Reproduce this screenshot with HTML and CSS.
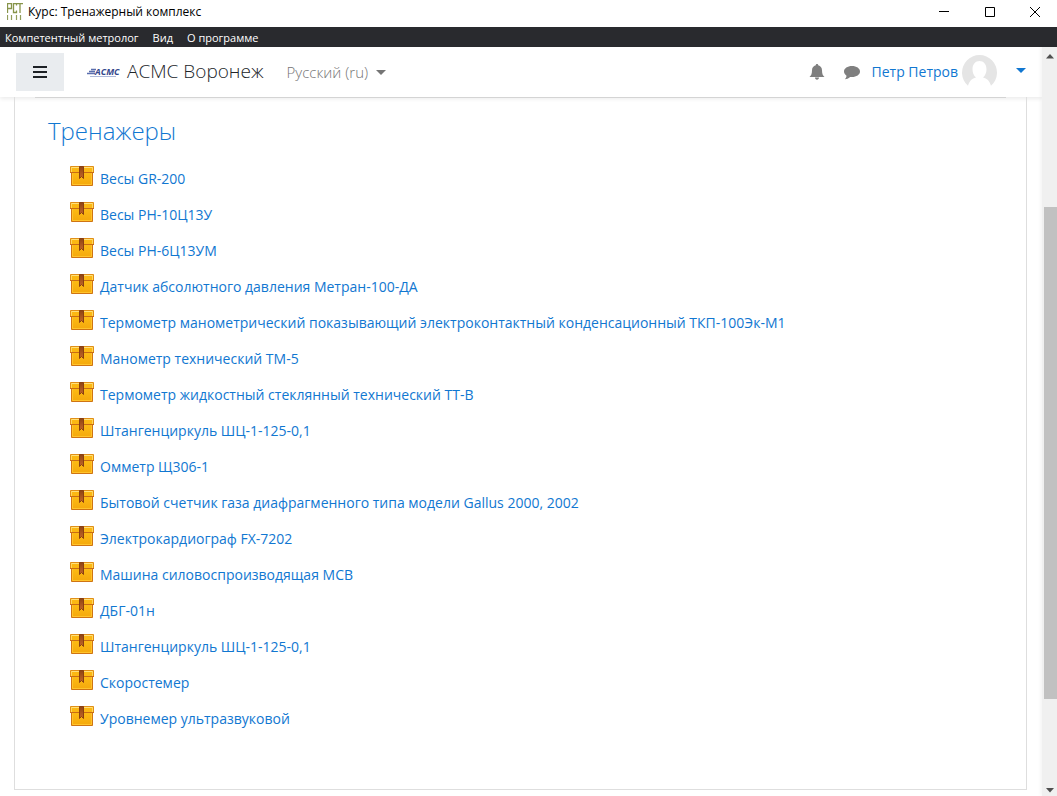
FILE: index.html
```html
<!DOCTYPE html>
<html lang="ru">
<head>
<meta charset="utf-8">
<title>Курс: Тренажерный комплекс</title>
<link rel="stylesheet" href="styles.css">
</head>
<body>
<svg class="defs" aria-hidden="true">
  <defs>
    <linearGradient id="box-fill" x1="0" y1="0" x2="0" y2="1"><stop offset="0" stop-color="#fdbd15"/><stop offset="1" stop-color="#f5a80c"/></linearGradient>
    <linearGradient id="tape-fill" x1="0" y1="0" x2="0" y2="1"><stop offset="0" stop-color="#8f4312"/><stop offset="1" stop-color="#c4682c"/></linearGradient>
  </defs>
  <symbol id="box" viewBox="0 0 24 20">
    <path d="M1.500 5.500h21v14h-21z" fill="url(#box-fill)" stroke="#cf7413"/>
    <path d="M2.500 7v11.500h19V7" fill="none" stroke="#ffc42c"/>
    <path d="M.5.5h23v6H.5z" fill="#fcb813" stroke="#e08f18"/>
    <path d="M1 1.500h22" stroke="#ffe07a"/>
    <path d="M1.500 1v5M22.500 1v5" stroke="#ffd75c"/>
    <path d="M0 6.500h24" stroke="#c96c14"/>
    <path d="M9.500.5h4v12l-2-2-2 2z" fill="url(#tape-fill)" stroke="#8a3f10"/>
  </symbol>
</svg>
<div class="window">
  <header class="titlebar">
    <svg class="app-icon" viewBox="0 0 16 17" aria-hidden="true">
      <path d="M.5 10V.5h4v5h-4M9.500 2.500v-2h-3v9h3v-2M10 .5h6M13 .5V10" fill="none" stroke="#87944a" stroke-width="1.300"/>
      <path d="M.5 12v5M4.500 12v5M9.500 12v5M13.500 12v5" stroke="#919d5a" stroke-width="1.200"/>
    </svg>
    <span class="window-title">Курс: Тренажерный комплекс</span>
    <div class="window-controls">
      <button class="window-button" aria-label="Свернуть"><svg viewBox="0 0 12 12"><path d="M1 5.500h10" stroke="#000"/></svg></button>
      <button class="window-button" aria-label="Развернуть"><svg viewBox="0 0 12 12"><path d="M1.500 1.500h9v9h-9z" fill="none" stroke="#000"/></svg></button>
      <button class="window-button" aria-label="Закрыть"><svg viewBox="0 0 12 12"><path d="M1 1l10 10M11 1L1 11" stroke="#000"/></svg></button>
    </div>
  </header>
  <nav class="menubar">
    <button class="menu-item">Компетентный метролог</button>
    <button class="menu-item">Вид</button>
    <button class="menu-item">О программе</button>
  </nav>
  <div class="viewport">
    <div class="page">
      <header class="navbar">
        <button class="drawer-toggle" aria-label="Меню"><svg viewBox="0 0 14 12"><path d="M0 1h14M0 6h14M0 11h14" stroke="#1d2125" stroke-width="2"/></svg></button>
        <a class="brand" href="#">
          <svg class="logo" viewBox="0 0 34 12" aria-hidden="true">
            <path d="M5 3.500h5M3 5.500h6M1 7.500h8" stroke="#5b6fae" stroke-width="1.500"/>
            <text class="logo-text" x="9" y="8.500">АСМС</text>
            <path d="M4 10.500h26" stroke="#aeb9da"/>
          </svg>
          <span class="site-name">АСМС Воронеж</span>
        </a>
        <button class="language">Русский (ru)<span class="caret"></span></button>
        <div class="user-area">
          <button class="icon-button" aria-label="Уведомления"><svg viewBox="0 0 16 16"><path d="M8 0c.8 0 1.200.5 1.200 1.300C11.800 2 13 4 13 6.200c0 3.600.8 5.300 2.500 6.800H.5C2.200 11.500 3 9.800 3 6.200 3 4 4.200 2 6.800 1.300 6.800.5 7.200 0 8 0zM6 13.500h4c0 1.300-.8 2.200-2 2.200s-2-.9-2-2.200z" fill="#7f7f7f"/></svg></button>
          <button class="icon-button" aria-label="Сообщения"><svg viewBox="0 0 16 16"><path d="M8 2c4.500 0 8 2.400 8 5.500S12.500 13 8 13c-.7 0-1.300 0-1.900-.1C4.500 14.400 2.600 15.100.8 15.200c1-1 1.600-2 1.700-3.500C1 10.700 0 9.200 0 7.500 0 4.400 3.500 2 8 2z" fill="#7f7f7f"/></svg></button>
          <button class="user-menu">
            <span class="user-name">Петр Петров</span>
            <svg class="avatar" viewBox="0 0 35 35" aria-hidden="true">
              <path d="M6 30.800A17.500 17.500 0 1 1 29 30.800c-1.500-5-4-7.500-8-8.300 2.200-1.800 3.500-5 3.500-8C24.500 9 21.500 6 17.500 6s-7 3-7 8.500c0 3 1.300 6.200 3.500 8-4 .8-6.500 3.300-8 8.300z" fill="#e5e5e5"/>
            </svg>
            <span class="caret"></span>
          </button>
        </div>
      </header>
      <main class="course">
        <section class="section">
          <h2 class="section-title">Тренажеры</h2>
          <ul class="activities">
            <li><a class="activity" href="#"><svg class="box"><use href="#box"/></svg><span>Весы GR-200</span></a></li>
            <li><a class="activity" href="#"><svg class="box"><use href="#box"/></svg><span>Весы РН-10Ц13У</span></a></li>
            <li><a class="activity" href="#"><svg class="box"><use href="#box"/></svg><span>Весы РН-6Ц13УМ</span></a></li>
            <li><a class="activity" href="#"><svg class="box"><use href="#box"/></svg><span>Датчик абсолютного давления Метран-100-ДА</span></a></li>
            <li><a class="activity" href="#"><svg class="box"><use href="#box"/></svg><span>Термометр манометрический показывающий электроконтактный конденсационный ТКП-100Эк-М1</span></a></li>
            <li><a class="activity" href="#"><svg class="box"><use href="#box"/></svg><span>Манометр технический ТМ-5</span></a></li>
            <li><a class="activity" href="#"><svg class="box"><use href="#box"/></svg><span>Термометр жидкостный стеклянный технический ТТ-В</span></a></li>
            <li><a class="activity" href="#"><svg class="box"><use href="#box"/></svg><span>Штангенциркуль ШЦ-1-125-0,1</span></a></li>
            <li><a class="activity" href="#"><svg class="box"><use href="#box"/></svg><span>Омметр Щ306-1</span></a></li>
            <li><a class="activity" href="#"><svg class="box"><use href="#box"/></svg><span>Бытовой счетчик газа диафрагменного типа модели Gallus 2000, 2002</span></a></li>
            <li><a class="activity" href="#"><svg class="box"><use href="#box"/></svg><span>Электрокардиограф FX-7202</span></a></li>
            <li><a class="activity" href="#"><svg class="box"><use href="#box"/></svg><span>Машина силовоспроизводящая МСВ</span></a></li>
            <li><a class="activity" href="#"><svg class="box"><use href="#box"/></svg><span>ДБГ-01н</span></a></li>
            <li><a class="activity" href="#"><svg class="box"><use href="#box"/></svg><span>Штангенциркуль ШЦ-1-125-0,1</span></a></li>
            <li><a class="activity" href="#"><svg class="box"><use href="#box"/></svg><span>Скоростемер</span></a></li>
            <li><a class="activity" href="#"><svg class="box"><use href="#box"/></svg><span>Уровнемер ультразвуковой</span></a></li>
          </ul>
        </section>
      </main>
    </div>
    <div class="scrollbar" aria-hidden="true">
      <svg class="arrow" viewBox="0 0 8 5"><path d="M4 0l4 4.500H0z" fill="#505050"/></svg>
      <div class="track"><div class="thumb"></div></div>
      <svg class="arrow" viewBox="0 0 8 5"><path d="M4 4.500L8 0H0z" fill="#505050"/></svg>
    </div>
  </div>
</div>
</body>
</html>
```
FILE: styles.css
```css
* { box-sizing: border-box; }
body {
  margin: 0;
  background: #fff;
  color: #212529;
  font-family: "Open Sans", "Noto Sans", sans-serif;
  font-size: 15px;
  font-weight: 300;
}
button {
  display: flex;
  align-items: center;
  padding: 0;
  border: 0;
  background: none;
  color: inherit;
  font: inherit;
}
a { color: #1177d1; text-decoration: none; }
.defs { position: absolute; width: 0; height: 0; }
.window { display: flex; flex-direction: column; height: 100vh; overflow: hidden; }

.titlebar {
  display: flex;
  align-items: center;
  flex: none;
  height: 27px;
  padding-left: 7px;
  gap: 5px;
  padding-bottom: 4px;
  color: #000;
  font-size: 12px;
  font-weight: 400;
}
.app-icon { width: 16px; height: 17px; }
.window-controls { display: flex; margin-left: auto; }
.window-button { justify-content: center; width: 46px; height: 23px; }
.window-button:last-child { width: 44px; }
.window-button svg { width: 12px; height: 12px; }

.menubar {
  display: flex;
  flex: none;
  height: 20px;
  gap: 14px;
  padding-left: 5px;
  background: #292a2e;
  color: #fff;
  font-size: 11px;
  font-weight: 400;
}

.viewport { display: flex; flex: 1; min-height: 0; }
.page { display: flex; flex-direction: column; flex: 1; min-width: 0; }
.navbar {
  display: flex;
  align-items: center;
  flex: none;
  height: 50px;
  padding: 0 16px;
  box-shadow: 0 2px 4px rgba(0, 0, 0, .08);
}
.drawer-toggle {
  justify-content: center;
  width: 48px;
  height: 38px;
  background: #e9ecef;
}
.drawer-toggle svg { width: 14px; height: 12px; }
.brand { display: flex; align-items: center; gap: 7px; margin-left: 22px; color: #212529; }
.logo { width: 34px; height: 12px; }
.logo-text { fill: #34478c; font: italic 700 9px "Open Sans", sans-serif; }
.site-name { font-size: 19px; line-height: 24px; padding-bottom: 2px; }
.language { gap: 8px; margin-left: 23px; color: #757575; }
.caret { border: 5px solid transparent; border-top-color: currentColor; border-bottom: 0; }
.user-area { display: flex; align-items: center; margin-left: auto; gap: 19px; }
.icon-button svg { width: 16px; height: 16px; }
.user-menu { margin-left: -8px; color: #1177d1; font-size: 14px; font-weight: 400; }
.user-name { padding-bottom: 2px; }
.avatar { width: 35px; height: 35px; margin: 0 19px 0 4px; }
.user-menu .caret { margin-bottom: 3px; }

.course {
  flex: 1;
  margin: 0 15px 6px 14px;
  padding: 0 20px;
  border: 1px solid #dedede;
  border-top: 0;
}
.section { padding: 17px 13px 0; border-top: 1px solid #d4d4d4; }
.section-title {
  margin: 0;
  color: #1177d1;
  font-size: 24px;
  font-weight: 300;
  line-height: 32px;
}
.activities {
  margin: 13px 0 0;
  padding: 0 0 0 22px;
  list-style: none;
  font-size: 14px;
  font-weight: 400;
}
.activity { display: flex; align-items: center; gap: 6px; height: 36px; }
.box { flex: none; width: 24px; height: 20px; margin-bottom: 5px; }

.scrollbar {
  display: flex;
  flex-direction: column;
  align-items: center;
  flex: none;
  width: 15px;
  padding: 7px 0 3px;
  background: #f0f0f0;
  box-shadow: -1px 0 4px rgba(0, 0, 0, .06);
}
.arrow { flex: none; width: 8px; height: 5px; }
.track { flex: 1; align-self: stretch; padding: 148px 0 89px 2px; }
.thumb { height: 100%; background: #c1c1c1; }
```
